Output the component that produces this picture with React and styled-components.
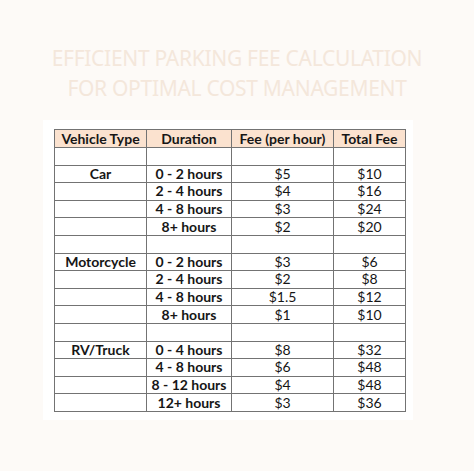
import React from 'react';
import styled, { createGlobalStyle } from 'styled-components';

const GlobalStyle = createGlobalStyle`
  html, body {
    margin: 0;
    padding: 0;
    background: #fdfaf7;
  }
`;

const Page = styled.div`
  width: 474px;
  height: 471px;
  background: #fdfaf7;
  font-family: Lato, "Noto Sans", sans-serif;
  overflow: hidden;
`;

const Title = styled.h1`
  margin: 0;
  padding-top: 43px;
  height: 120px;
  box-sizing: border-box;
  text-align: center;
  font-family: "Noto Sans", sans-serif;
  font-weight: 400;
  font-size: 21px;
  line-height: 30px;
  color: #f4e7db;
  letter-spacing: -0.3px;
`;

const Panel = styled.div`
  margin-left: 43px;
  width: 370px;
  height: 300px;
  background: #ffffff;
  padding: 9px 0 0 11px;
  box-sizing: border-box;
`;

const Table = styled.table`
  border-collapse: collapse;
  width: 351px;
  table-layout: fixed;
  border: 1.5px solid #737373;
`;

const HeadCell = styled.th`
  background: #fbe2cf;
  height: 17px;
  padding: 0;
  font-size: 14px;
  font-weight: 700;
  color: #161616;
  border: 1px solid #737373;
  text-align: center;
  line-height: 17px;
`;

const Cell = styled.td`
  height: 16.6px;
  padding: 0;
  font-size: 14px;
  font-weight: ${p => (p.$bold ? 700 : 400)};
  color: #161616;
  border: 1px solid #737373;
  text-align: center;
  line-height: 16px;
`;

const groups = [
  {
    type: 'Car',
    rows: [
      ['0 - 2 hours', '$5', '$10'],
      ['2 - 4 hours', '$4', '$16'],
      ['4 - 8 hours', '$3', '$24'],
      ['8+ hours', '$2', '$20'],
    ],
  },
  {
    type: 'Motorcycle',
    rows: [
      ['0 - 2 hours', '$3', '$6'],
      ['2 - 4 hours', '$2', '$8'],
      ['4 - 8 hours', '$1.5', '$12'],
      ['8+ hours', '$1', '$10'],
    ],
  },
  {
    type: 'RV/Truck',
    rows: [
      ['0 - 4 hours', '$8', '$32'],
      ['4 - 8 hours', '$6', '$48'],
      ['8 - 12 hours', '$4', '$48'],
      ['12+ hours', '$3', '$36'],
    ],
  },
];

export default function App() {
  return (
    <Page>
      <GlobalStyle />
      <Title>
        EFFICIENT PARKING FEE CALCULATION
        <br />
        FOR OPTIMAL COST MANAGEMENT
      </Title>
      <Panel>
        <Table>
          <colgroup>
            <col style={{ width: 92 }} />
            <col style={{ width: 85 }} />
            <col style={{ width: 102 }} />
            <col style={{ width: 72 }} />
          </colgroup>
          <thead>
            <tr>
              <HeadCell>Vehicle Type</HeadCell>
              <HeadCell>Duration</HeadCell>
              <HeadCell>Fee (per hour)</HeadCell>
              <HeadCell>Total Fee</HeadCell>
            </tr>
          </thead>
          <tbody>
            {groups.map(g => (
              <React.Fragment key={g.type}>
                <tr>
                  <Cell />
                  <Cell />
                  <Cell />
                  <Cell />
                </tr>
                {g.rows.map((r, i) => (
                  <tr key={r[0]}>
                    <Cell $bold>{i === 0 ? g.type : ''}</Cell>
                    <Cell $bold>{r[0]}</Cell>
                    <Cell>{r[1]}</Cell>
                    <Cell>{r[2]}</Cell>
                  </tr>
                ))}
              </React.Fragment>
            ))}
          </tbody>
        </Table>
      </Panel>
    </Page>
  );
}
